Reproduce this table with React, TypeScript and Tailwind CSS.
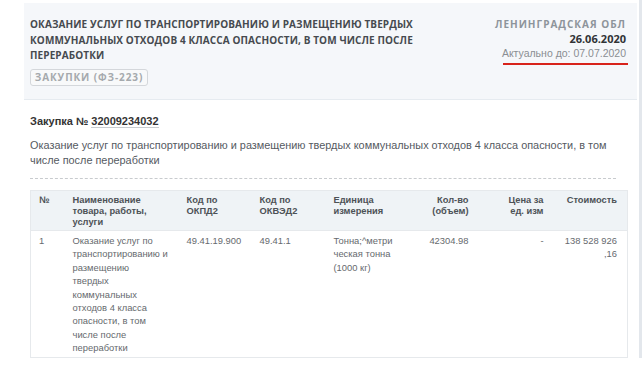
import React from 'react';

const sans = "font-['Liberation_Sans',Arial,sans-serif]";
const head = "font-['Open_Sans','DejaVu_Sans',sans-serif]";

export default function App() {
  return (
    <div className={`flex h-[392px] w-[642px] overflow-hidden bg-white ${sans}`}>
      <div className="w-[24px] shrink-0" />
      <div className="w-[613px] shrink-0">
        {/* header */}
        <div className="mt-[3px] flex h-[97px] justify-between border-b border-[#e6ebf0] bg-[#f5f7fa] pl-[6px] pr-[11px] pt-[14px]">
          <div className="w-[430px]">
            <h1 className={`${head} whitespace-nowrap text-[10px] font-bold uppercase leading-[15.5px] tracking-[0.1px] text-[#464a4f]`}>
              Оказание услуг по транспортированию и размещению твердых
              <br />
              коммунальных отходов 4 класса опасности, в том числе после
              <br />
              переработки
            </h1>
            <div
              className={`${head} mt-[1px] inline-flex h-[17px] w-[118px] items-center justify-center whitespace-nowrap rounded-[3px] border border-[#d4d7db] bg-[#f8f9fa] text-[10px] font-bold tracking-[0.9px] text-[#a5a9ad]`}
            >
              ЗАКУПКИ (ФЗ-223)
            </div>
          </div>
          <div className="flex flex-col items-end">
            <div className={`${head} text-[10px] font-bold leading-[15px] tracking-[1px] text-[#8d949b]`}>
              ЛЕНИНГРАДСКАЯ ОБЛ
            </div>
            <div className={`${head} text-[11px] font-bold leading-[14px] text-[#303336]`}>26.06.2020</div>
            <div className="text-[10.5px] leading-[14px] text-[#8a8e92]">Актуально до: 07.07.2020</div>
            <div className="mr-[-2px] mt-[3px] h-[2px] w-[125px] bg-[#d8231b]" />
          </div>
        </div>

        {/* body */}
        <div className="px-[6px] pt-[14px]">
          <div className="text-[11px] font-bold leading-[15px] text-[#333]">
            Закупка № <span className="border-b border-[#c8ccd0] text-[#333]">32009234032</span>
          </div>
          <p className="mt-[9px] text-[10.9px] leading-[15px] text-[#555a5f]">
            Оказание услуг по транспортированию и размещению твердых коммунальных отходов 4 класса опасности, в
            том числе после переработки
          </p>
          <div className="mr-[15px] mt-[10px] border-t border-dashed border-[#c8cbce]" />

          <table className="mt-[11px] w-[597px] table-fixed border-collapse whitespace-nowrap border border-[#e6e9ec] text-[9.4px]">
            <colgroup>
              <col className="w-[36px]" />
              <col className="w-[114px]" />
              <col className="w-[73px]" />
              <col className="w-[74px]" />
              <col className="w-[76px]" />
              <col className="w-[71px]" />
              <col className="w-[75px]" />
              <col className="w-[78px]" />
            </colgroup>
            <thead className="bg-[#eff3f6] text-[9.3px] text-[#4d5256]">
              <tr className="h-[40px] align-top leading-[11px]">
                <th className="pl-[8px] pt-[4px] text-left font-bold">№</th>
                <th className="px-[6px] pt-[4px] text-left font-bold">
                  Наименование
                  <br />
                  товара, работы,
                  <br />
                  услуги
                </th>
                <th className="px-[6px] pt-[4px] text-left font-bold">
                  Код по
                  <br />
                  ОКПД2
                </th>
                <th className="px-[6px] pt-[4px] text-left font-bold">
                  Код по
                  <br />
                  ОКВЭД2
                </th>
                <th className="px-[6px] pt-[4px] text-left font-bold">
                  Единица
                  <br />
                  измерения
                </th>
                <th className="px-[6px] pt-[4px] text-right font-bold">
                  Кол-во
                  <br />
                  (объем)
                </th>
                <th className="px-[6px] pt-[4px] text-right font-bold">
                  Цена за
                  <br />
                  ед. изм
                </th>
                <th className="pl-[6px] pr-[10px] pt-[4px] text-right font-bold">Стоимость</th>
              </tr>
            </thead>
            <tbody className="text-[#666a6e]">
              <tr className="h-[127px] border-t border-[#e6e9ec] align-top leading-[13.4px]">
                <td className="pl-[8px] pt-[3px]">1</td>
                <td className="px-[6px] pt-[3px]">
                  Оказание услуг по
                  <br />
                  транспортированию и
                  <br />
                  размещению
                  <br />
                  твердых
                  <br />
                  коммунальных
                  <br />
                  отходов 4 класса
                  <br />
                  опасности, в том
                  <br />
                  числе после
                  <br />
                  переработки
                </td>
                <td className="px-[6px] pt-[3px]">49.41.19.900</td>
                <td className="px-[6px] pt-[3px]">49.41.1</td>
                <td className="px-[6px] pt-[3px]">
                  Тонна;^метри
                  <br />
                  ческая тонна
                  <br />
                  (1000 кг)
                </td>
                <td className="px-[6px] pt-[3px] text-right">42304.98</td>
                <td className="px-[6px] pt-[3px] text-right">-</td>
                <td className="pl-[6px] pr-[10px] pt-[3px] text-right">
                  138 528 926
                  <br />
                  ,16
                </td>
              </tr>
            </tbody>
          </table>
        </div>
      </div>
      <div className="ml-[2px] h-[358px] w-[3px] bg-[#e3e7ec]" />
    </div>
  );
}
